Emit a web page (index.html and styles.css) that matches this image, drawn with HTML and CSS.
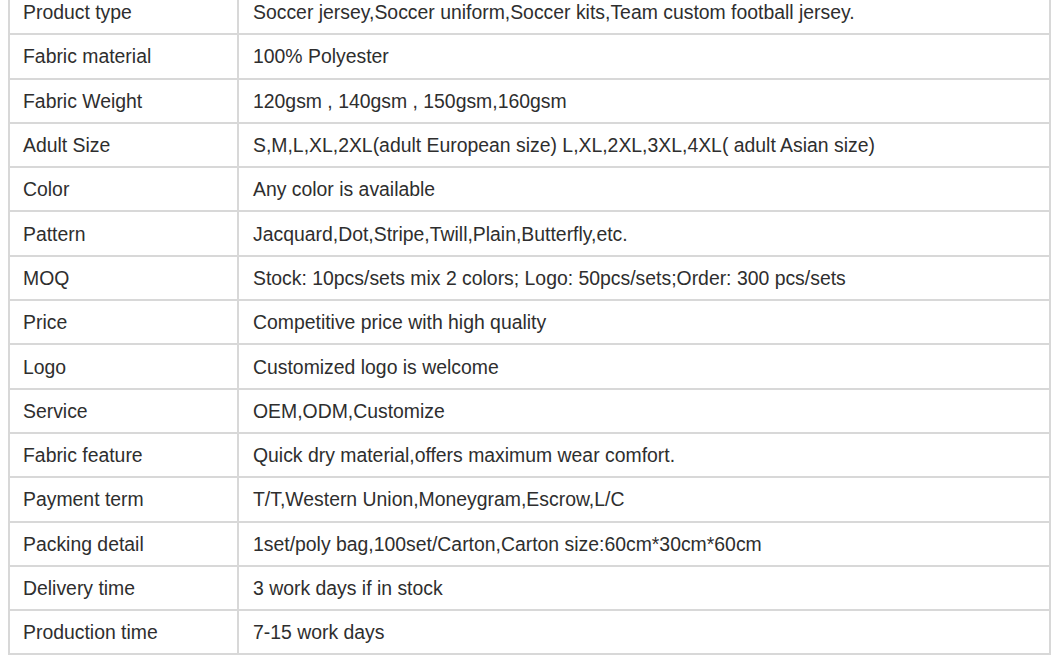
FILE: index.html
```html
<!DOCTYPE html>
<html>
<head>
<meta charset="utf-8">
<link rel="stylesheet" href="styles.css">
</head>
<body>
<div class="wrap">
<table class="spec">
<tbody>
<tr><td class="k">Product type</td><td class="v">Soccer jersey,Soccer uniform,Soccer kits,Team custom football jersey.</td></tr>
<tr><td class="k">Fabric material</td><td class="v">100% Polyester</td></tr>
<tr><td class="k">Fabric Weight</td><td class="v">120gsm , 140gsm , 150gsm,160gsm</td></tr>
<tr><td class="k">Adult Size</td><td class="v">S,M,L,XL,2XL(adult European size) L,XL,2XL,3XL,4XL( adult Asian size)</td></tr>
<tr><td class="k">Color</td><td class="v">Any color is available</td></tr>
<tr><td class="k">Pattern</td><td class="v">Jacquard,Dot,Stripe,Twill,Plain,Butterfly,etc.</td></tr>
<tr><td class="k">MOQ</td><td class="v">Stock: 10pcs/sets mix 2 colors; Logo: 50pcs/sets;Order: 300 pcs/sets</td></tr>
<tr><td class="k">Price</td><td class="v">Competitive price with high quality</td></tr>
<tr><td class="k">Logo</td><td class="v">Customized logo is welcome</td></tr>
<tr><td class="k">Service</td><td class="v">OEM,ODM,Customize</td></tr>
<tr><td class="k">Fabric feature</td><td class="v">Quick dry material,offers maximum wear comfort.</td></tr>
<tr><td class="k">Payment term</td><td class="v">T/T,Western Union,Moneygram,Escrow,L/C</td></tr>
<tr><td class="k">Packing detail</td><td class="v">1set/poly bag,100set/Carton,Carton size:60cm*30cm*60cm</td></tr>
<tr><td class="k">Delivery time</td><td class="v">3 work days if in stock</td></tr>
<tr><td class="k">Production time</td><td class="v">7-15 work days</td></tr>
</tbody>
</table>
</div>
</body>
</html>
```

FILE: styles.css
```css
html, body {
  margin: 0;
  padding: 0;
  background: #ffffff;
}
body {
  font-family: "Liberation Sans", Arial, sans-serif;
  color: #2e2e2e;
}
.wrap {
  padding-left: 8px;
  margin-top: -11px;
}
.spec {
  border-collapse: collapse;
  width: 1043px;
  table-layout: fixed;
}
.spec td {
  border: 2px solid #d8d8d8;
  height: 44.3px;
  padding: 0 0 0 13px;
  font-size: 19.4px;
  line-height: 22px;
  vertical-align: middle;
  white-space: nowrap;
  box-sizing: border-box;
}
.spec td.k {
  width: 229px;
}
.spec td.v {
  padding-left: 14px;
}
```
